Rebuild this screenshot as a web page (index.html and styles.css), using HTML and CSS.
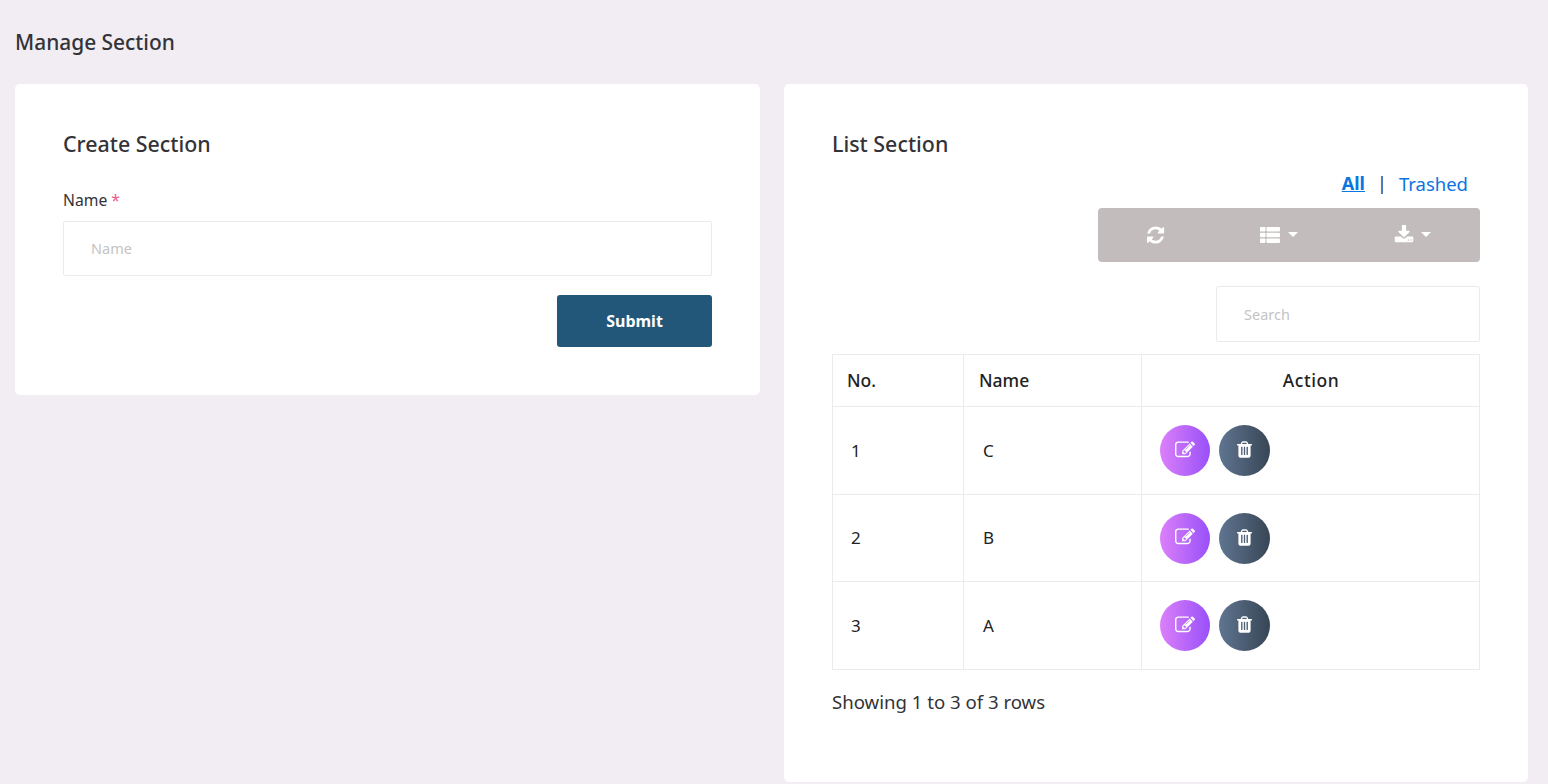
FILE: index.html
```html
<!DOCTYPE html>
<html lang="en">
<head>
<meta charset="utf-8">
<title>Manage Section</title>
<link rel="stylesheet" href="styles.css">
</head>
<body>
<main class="page">
  <h1 class="page-title">Manage Section</h1>
  <div class="columns">
    <section class="card card-form">
      <h2 class="card-title">Create Section</h2>
      <form class="form">
        <label class="label" for="name">Name <span class="req">*</span></label>
        <input class="input input-name" id="name" type="text" placeholder="Name">
        <div class="form-actions"><button class="submit" type="button">Submit</button></div>
      </form>
    </section>
    <section class="card card-list">
      <h2 class="card-title">List Section</h2>
      <div class="filter"><a class="link active" href="#">All</a><span class="sep">|</span><a class="link" href="#">Trashed</a></div>
      <div class="toolbar-row">
        <div class="toolbar">
          <button class="tool tool-a" type="button"><svg class="ico" viewBox="0 0 1792 1792"><path d="M1511 1056q0 5-1 7-64 268-268 434.500t-478 166.500q-146 0-282.500-55t-243.500-157l-129 129q-19 19-45 19t-45-19-19-45v-448q0-26 19-45t45-19h448q26 0 45 19t19 45-19 45l-137 137q71 66 161 102t187 36q134 0 250-65t186-179q11-17 53-117 8-23 30-23h192q13 0 22.500 9.500t9.500 22.500zm25-800v448q0 26-19 45t-45 19h-448q-26 0-45-19t-19-45 19-45l138-138q-148-137-349-137-134 0-250 65t-186 179q-11 17-53 117-8 23-30 23h-199q-13 0-22.500-9.500t-9.500-22.500v-7q65-268 270-434.500t480-166.500q146 0 284 55.500t245 156.500l130-129q19-19 45-19t45 19 19 45z"/></svg></button>
          <button class="tool tool-b" type="button"><svg class="ico-list" viewBox="0 0 20 16"><rect x="0" y="0" width="5.500" height="4.500" rx=".8"/><rect x="6.500" y="0" width="13.500" height="4.500" rx=".8"/><rect x="0" y="5.700" width="5.500" height="4.500" rx=".8"/><rect x="6.500" y="5.700" width="13.500" height="4.500" rx=".8"/><rect x="0" y="11.400" width="5.500" height="4.500" rx=".8"/><rect x="6.500" y="11.400" width="13.500" height="4.500" rx=".8"/></svg><span class="caret"></span></button>
          <button class="tool tool-c" type="button"><svg class="ico" viewBox="0 0 1792 1792"><path d="M1344 1344q0-26-19-45t-45-19-45 19-19 45 19 45 45 19 45-19 19-45zm256 0q0-26-19-45t-45-19-45 19-19 45 19 45 45 19 45-19 19-45zm128-224v320q0 40-28 68t-68 28h-1472q-40 0-68-28t-28-68v-320q0-40 28-68t68-28h465l135 136q58 56 136 56t136-56l136-136h464q40 0 68 28t28 68zm-325-569q17 41-14 70l-448 448q-18 19-45 19t-45-19l-448-448q-31-29-14-70 17-39 59-39h256v-448q0-26 19-45t45-19h256q26 0 45 19t19 45v448h256q42 0 59 39z"/></svg><span class="caret"></span></button>
        </div>
      </div>
      <div class="search-row"><input class="input search" type="text" placeholder="Search"></div>
      <table class="table">
        <colgroup><col class="c1"><col class="c2"><col class="c3"></colgroup>
        <thead>
          <tr><th>No.</th><th>Name</th><th class="center">Action</th></tr>
        </thead>
        <tbody>
          <tr class="r1"><td>1</td><td>C</td><td><div class="actions">
            <button class="round edit" type="button"><svg class="ico-edit" viewBox="0 0 1792 1792"><path d="M888 1184l116-116-152-152-116 116v56h96v96h56zm440-720q-16-16-33 1l-350 350q-17 17-1 33t33-1l350-350q17-17 1-33zm80 594v190q0 119-84.500 203.500t-203.500 84.500h-832q-119 0-203.500-84.500t-84.500-203.500v-832q0-119 84.500-203.500t203.500-84.500h832q63 0 117 25 15 7 18 23 3 17-9 29l-49 49q-14 14-32 8-23-6-45-6h-832q-66 0-113 47t-47 113v832q0 66 47 113t113 47h832q66 0 113-47t47-113v-126q0-13 9-22l64-64q15-15 35-7t20 29zm-96-738l288 288-672 672h-288v-288zm444 132l-92 92-288-288 92-92q28-28 68-28t68 28l152 152q28 28 28 68t-28 68z"/></svg></button>
            <button class="round del" type="button"><svg class="ico-del" viewBox="0 0 1792 1792"><path d="M704 1376v-704q0-14-9-23t-23-9h-64q-14 0-23 9t-9 23v704q0 14 9 23t23 9h64q14 0 23-9t9-23zm256 0v-704q0-14-9-23t-23-9h-64q-14 0-23 9t-9 23v704q0 14 9 23t23 9h64q14 0 23-9t9-23zm256 0v-704q0-14-9-23t-23-9h-64q-14 0-23 9t-9 23v704q0 14 9 23t23 9h64q14 0 23-9t9-23zm-544-992h448l-48-117q-7-9-17-11h-317q-10 2-17 11zm928 32v64q0 14-9 23t-23 9h-96v948q0 83-47 143.500t-113 60.500h-832q-66 0-113-58.500t-47-141.500v-952h-96q-14 0-23-9t-9-23v-64q0-14 9-23t23-9h309l70-167q15-37 54-63t79-26h320q40 0 79 26t54 63l70 167h309q14 0 23 9t9 23z"/></svg></button>
          </div></td></tr>
          <tr class="r2"><td>2</td><td>B</td><td><div class="actions">
            <button class="round edit" type="button"><svg class="ico-edit" viewBox="0 0 1792 1792"><path d="M888 1184l116-116-152-152-116 116v56h96v96h56zm440-720q-16-16-33 1l-350 350q-17 17-1 33t33-1l350-350q17-17 1-33zm80 594v190q0 119-84.500 203.500t-203.500 84.500h-832q-119 0-203.500-84.500t-84.500-203.500v-832q0-119 84.500-203.500t203.500-84.500h832q63 0 117 25 15 7 18 23 3 17-9 29l-49 49q-14 14-32 8-23-6-45-6h-832q-66 0-113 47t-47 113v832q0 66 47 113t113 47h832q66 0 113-47t47-113v-126q0-13 9-22l64-64q15-15 35-7t20 29zm-96-738l288 288-672 672h-288v-288zm444 132l-92 92-288-288 92-92q28-28 68-28t68 28l152 152q28 28 28 68t-28 68z"/></svg></button>
            <button class="round del" type="button"><svg class="ico-del" viewBox="0 0 1792 1792"><path d="M704 1376v-704q0-14-9-23t-23-9h-64q-14 0-23 9t-9 23v704q0 14 9 23t23 9h64q14 0 23-9t9-23zm256 0v-704q0-14-9-23t-23-9h-64q-14 0-23 9t-9 23v704q0 14 9 23t23 9h64q14 0 23-9t9-23zm256 0v-704q0-14-9-23t-23-9h-64q-14 0-23 9t-9 23v704q0 14 9 23t23 9h64q14 0 23-9t9-23zm-544-992h448l-48-117q-7-9-17-11h-317q-10 2-17 11zm928 32v64q0 14-9 23t-23 9h-96v948q0 83-47 143.500t-113 60.500h-832q-66 0-113-58.500t-47-141.500v-952h-96q-14 0-23-9t-9-23v-64q0-14 9-23t23-9h309l70-167q15-37 54-63t79-26h320q40 0 79 26t54 63l70 167h309q14 0 23 9t9 23z"/></svg></button>
          </div></td></tr>
          <tr class="r3"><td>3</td><td>A</td><td><div class="actions">
            <button class="round edit" type="button"><svg class="ico-edit" viewBox="0 0 1792 1792"><path d="M888 1184l116-116-152-152-116 116v56h96v96h56zm440-720q-16-16-33 1l-350 350q-17 17-1 33t33-1l350-350q17-17 1-33zm80 594v190q0 119-84.500 203.500t-203.500 84.500h-832q-119 0-203.500-84.500t-84.500-203.500v-832q0-119 84.500-203.500t203.500-84.500h832q63 0 117 25 15 7 18 23 3 17-9 29l-49 49q-14 14-32 8-23-6-45-6h-832q-66 0-113 47t-47 113v832q0 66 47 113t113 47h832q66 0 113-47t47-113v-126q0-13 9-22l64-64q15-15 35-7t20 29zm-96-738l288 288-672 672h-288v-288zm444 132l-92 92-288-288 92-92q28-28 68-28t68 28l152 152q28 28 28 68t-28 68z"/></svg></button>
            <button class="round del" type="button"><svg class="ico-del" viewBox="0 0 1792 1792"><path d="M704 1376v-704q0-14-9-23t-23-9h-64q-14 0-23 9t-9 23v704q0 14 9 23t23 9h64q14 0 23-9t9-23zm256 0v-704q0-14-9-23t-23-9h-64q-14 0-23 9t-9 23v704q0 14 9 23t23 9h64q14 0 23-9t9-23zm256 0v-704q0-14-9-23t-23-9h-64q-14 0-23 9t-9 23v704q0 14 9 23t23 9h64q14 0 23-9t9-23zm-544-992h448l-48-117q-7-9-17-11h-317q-10 2-17 11zm928 32v64q0 14-9 23t-23 9h-96v948q0 83-47 143.500t-113 60.500h-832q-66 0-113-58.500t-47-141.500v-952h-96q-14 0-23-9t-9-23v-64q0-14 9-23t23-9h309l70-167q15-37 54-63t79-26h320q40 0 79 26t54 63l70 167h309q14 0 23 9t9 23z"/></svg></button>
          </div></td></tr>
        </tbody>
      </table>
      <p class="summary">Showing 1 to 3 of 3 rows</p>
    </section>
  </div>
</main>
</body>
</html>
```
FILE: styles.css
```css
* { box-sizing: border-box; }
html, body { margin: 0; height: 100%; }
body {
  background: #f1edf3;
  color: #333338;
  font-family: "Noto Sans", "Open Sans", sans-serif;
  overflow: hidden;
}
.page { padding: 27px 20px 0 15px; }
.page-title {
  margin: 0 0 27px;
  font-size: 20.900px;
  font-weight: 500;
  line-height: 30px;
}
.columns {
  display: grid;
  grid-template-columns: 745px 744px;
  gap: 24px;
  align-items: start;
}
.card {
  background: #fff;
  border-radius: 5px;
  padding: 48px;
}
.card-form { height: 311px; }
.card-list { height: 698px; }
.card-title {
  margin: 0;
  font-size: 21.400px;
  font-weight: 500;
  line-height: 24px;
}
.form { margin-top: 33px; }
.label {
  display: block;
  font-size: 15.700px;
  line-height: 22px;
  margin-bottom: 10px;
}
.req { color: #e8608a; }
.input {
  display: block;
  width: 100%;
  height: 55px;
  padding: 0 27px;
  background: #fff;
  border: 1px solid #ebebeb;
  border-radius: 2px;
  font: 14.500px "Noto Sans", "Open Sans", sans-serif;
  color: #333;
  outline: none;
}
.input-name { padding-bottom: 2px; }
.input::placeholder { color: #c4c4c4; opacity: 1; }
.form-actions {
  display: flex;
  justify-content: flex-end;
  margin-top: 19px;
}
.submit {
  width: 155px;
  height: 52px;
  border: 0;
  border-radius: 3px;
  background: #22577a;
  color: #fff;
  font: 700 16px "Noto Sans", "Open Sans", sans-serif;
}
.filter {
  display: flex;
  justify-content: flex-end;
  align-items: center;
  height: 24px;
  margin-top: 15px;
  padding-right: 12px;
  font-size: 18px;
}
.link { color: #0a75e0; text-decoration: none; font-size: 18.500px; }
.link.active { font-size: 18px; font-weight: 700; text-decoration: underline; }
.sep { margin: 0 12px; color: #333; }
.toolbar-row { display: flex; justify-content: flex-end; margin-top: 13px; }
.toolbar {
  display: flex;
  width: 382px;
  height: 54px;
  background: #c2bcbc;
  border-radius: 4px;
}
.tool {
  display: flex;
  align-items: center;
  justify-content: center;
  gap: 8px;
  padding: 0 0 1px;
  border: 0;
  background: transparent;
  fill: #fff;
}
.tool-a { width: 118px; }
.tool-b { width: 126px; }
.tool-c { width: 138px; padding-left: 3px; gap: 7px; }
.ico { width: 20px; height: 20px; }
.ico-list { width: 20px; height: 16px; }
.caret {
  width: 0;
  height: 0;
  border-left: 5px solid transparent;
  border-right: 5px solid transparent;
  border-top: 5px solid #fff;
}
.search-row { display: flex; justify-content: flex-end; margin-top: 24px; }
.search { width: 264px; height: 56px; }
.table {
  width: 647px;
  margin-top: 12px;
  border-collapse: collapse;
  table-layout: fixed;
  font-size: 17px;
}
.c1 { width: 131px; }
.c2 { width: 178px; }
.c3 { width: 338px; }
.table th, .table td { border: 1px solid #ebebeb; }
.table th {
  height: 52px;
  padding: 0 14px 2px 15px;
  font-size: 17.500px;
  font-weight: 500;
  text-align: left;
  color: #222;
}
.table th:first-child { padding-left: 14px; }
.table th.center { text-align: center; letter-spacing: 0.6px; }
.table td { padding: 0 18px; color: #222; }
.table td:nth-child(2) { padding-left: 19px; }
.r1 { height: 88px; }
.r2 { height: 87px; }
.r3 { height: 88px; }
.r2 td:not(:last-child) { padding-bottom: 1px; }
.actions { display: flex; gap: 9px; }
.round {
  display: flex;
  align-items: center;
  justify-content: center;
  width: 51px;
  height: 51px;
  padding: 0 0 2px;
  border: 0;
  border-radius: 50%;
  fill: #fff;
}
.edit { width: 50px; background: linear-gradient(90deg, #dc80fa, #9850f8); }
.del { background: linear-gradient(90deg, #5f7590, #384656); }
.ico-edit { width: 20px; height: 20px; }
.ico-del { width: 19px; height: 19px; }
.summary {
  margin: 20px 0 0;
  font-size: 18.600px;
  line-height: 24px;
}
```
